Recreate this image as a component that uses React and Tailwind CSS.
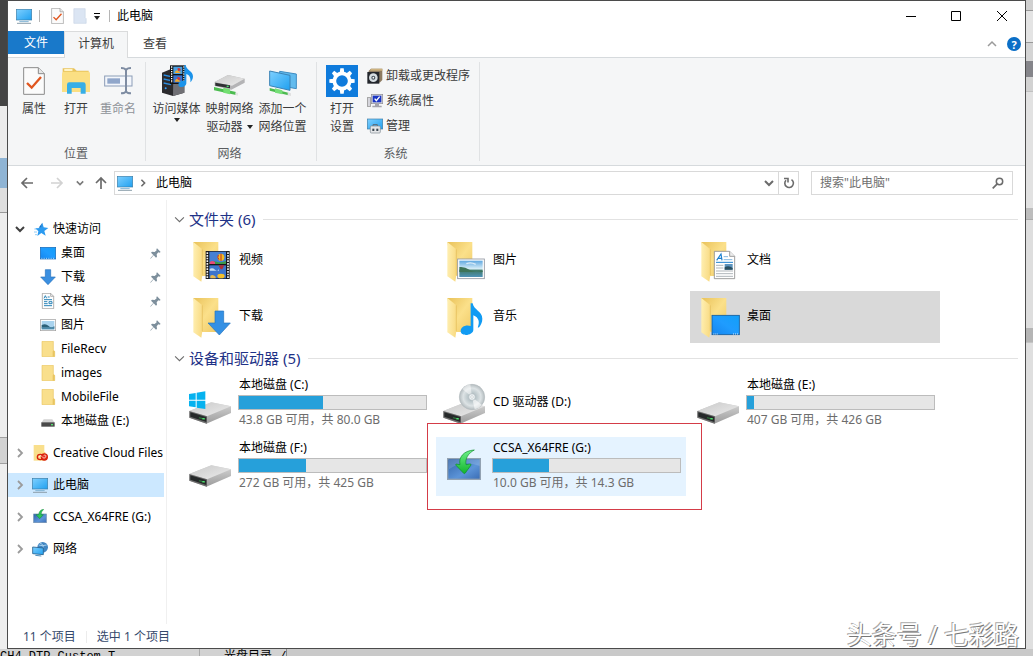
import React from "react";

/* ---------- shared paint ---------- */

function Paints() {
  return (
    <svg className="absolute h-0 w-0" aria-hidden="true">
      <defs>
        <linearGradient id="screen" x1="0" y1="0" x2="1" y2="1">
          <stop offset="0" stopColor="#7fd0ff" />
          <stop offset="1" stopColor="#1fa0f0" />
        </linearGradient>
        <linearGradient id="desk" x1="0" y1="1" x2="1" y2="0">
          <stop offset="0" stopColor="#1585ee" />
          <stop offset="0.5" stopColor="#1f9cff" />
          <stop offset="1" stopColor="#12a0f8" />
        </linearGradient>
        <linearGradient id="back" x1="0" y1="0" x2="1" y2="1">
          <stop offset="0" stopColor="#e9c25a" />
          <stop offset="0.5" stopColor="#fbe08a" />
          <stop offset="1" stopColor="#efc965" />
        </linearGradient>
        <linearGradient id="flap" x1="0" y1="0" x2="1" y2="0.2">
          <stop offset="0" stopColor="#fff0b4" />
          <stop offset="1" stopColor="#f9dc86" />
        </linearGradient>
        <linearGradient id="driveTop" x1="0" y1="0" x2="1" y2="1">
          <stop offset="0" stopColor="#c9c9c9" />
          <stop offset="1" stopColor="#ececec" />
        </linearGradient>
        <linearGradient id="driveSide" x1="0" y1="0" x2="0" y2="1">
          <stop offset="0" stopColor="#d6d6d6" />
          <stop offset="1" stopColor="#9c9c9c" />
        </linearGradient>
        <linearGradient id="sky" x1="0" y1="0" x2="0" y2="1">
          <stop offset="0" stopColor="#5fa8e0" />
          <stop offset="0.5" stopColor="#d8eef8" />
          <stop offset="0.6" stopColor="#3f7a6a" />
          <stop offset="1" stopColor="#4f93b8" />
        </linearGradient>
        <linearGradient id="green" x1="0" y1="0" x2="0" y2="1">
          <stop offset="0" stopColor="#6df08a" />
          <stop offset="1" stopColor="#12b52c" />
        </linearGradient>
        <linearGradient id="navy" x1="0" y1="0" x2="1" y2="1">
          <stop offset="0" stopColor="#2f62a8" />
          <stop offset="0.6" stopColor="#5c94d8" />
          <stop offset="1" stopColor="#3a6cb4" />
        </linearGradient>
        <radialGradient id="disc">
          <stop offset="0" stopColor="#ffffff" />
          <stop offset="0.3" stopColor="#b8c4c8" />
          <stop offset="0.7" stopColor="#dde3e5" />
          <stop offset="1" stopColor="#b4bcbf" />
        </radialGradient>
      </defs>
    </svg>
  );
}

/* ---------- small icons ---------- */

const PcIcon = () => (
  <svg viewBox="0 0 48 48" className="h-4 w-4 shrink-0">
    <rect x="1" y="4" width="46" height="32" fill="url(#screen)" stroke="#3d7ea8" strokeWidth="2" />
    <path d="M10 41h28" stroke="#7fb2d4" strokeWidth="3" />
    <path d="M3 46h42" stroke="#8da0ac" strokeWidth="3" />
  </svg>
);

const CheckDoc = ({ className }) => (
  <svg viewBox="0 0 66 84" className={className}>
    <path d="M2 2h44l18 18v62H2z" fill="#fbfbfb" stroke="#8b8b8b" strokeWidth="3" />
    <path d="M46 2v18h18" fill="#e6e6e6" stroke="#8b8b8b" strokeWidth="3" />
    <path d="M12 48l14 14 28-32" fill="none" stroke="#e0561f" strokeWidth="7" />
  </svg>
);

const BlankDoc = () => (
  <svg viewBox="0 0 39 48" className="h-4 w-3.5 shrink-0">
    <path d="M1 2h34v27l3 3v14H1z" fill="#dbe5f3" stroke="#c9d5e6" strokeWidth="2" />
  </svg>
);

const Caret = ({ className = "" }) => (
  <svg viewBox="0 0 6 4" className={"h-1 w-1.5 shrink-0 " + className}>
    <path d="M0 0h6L3 4z" fill="#222" />
  </svg>
);

const Chevron = ({ dir, color = "#8a8a8a", className = "h-2.5 w-2.5", weight = 1.5 }) => {
  const d = { down: "M1 3l4 4 4-4", up: "M1 7l4-4 4 4", right: "M3 1l4 4-4 4" }[dir];
  return (
    <svg viewBox="0 0 10 10" className={"shrink-0 " + className}>
      <path d={d} fill="none" stroke={color} strokeWidth={weight} />
    </svg>
  );
};

const StarIcon = () => (
  <svg viewBox="0 0 48 48" className="h-4 w-4 shrink-0">
    <path d="M28 5l4 14 14 2-12 9 4 14-13-8-12 9 3-14-9-9 15-1z" fill="#2b9af0" />
    <path d="M28 5l-4 15h-7z" fill="#1273c8" />
    <path d="M4 24h10M3 33h9M6 41h6" stroke="#5cb4f5" strokeWidth="2" />
  </svg>
);

const DeskIcon = () => (
  <svg viewBox="0 0 48 48" className="h-4 w-4 shrink-0">
    <rect x="1" y="7" width="46" height="35" fill="url(#desk)" stroke="#1567b4" strokeWidth="2" />
    <path d="M4 40h40" stroke="#fff" strokeWidth="2" strokeDasharray="3 4" />
  </svg>
);

const DownIcon = () => (
  <svg viewBox="0 0 48 48" className="h-4 w-4 shrink-0">
    <path d="M16 2h16v22h14L24 47 2 24h14z" fill="#3a8fe0" stroke="#2571bc" strokeWidth="2" />
  </svg>
);

const DocIcon = () => (
  <svg viewBox="0 0 48 48" className="h-4 w-4 shrink-0">
    <path d="M7 1h25l9 9v37H7z" fill="#fdfdfd" stroke="#8c8c8c" strokeWidth="2" />
    <path d="M32 1v9h9" fill="none" stroke="#8c8c8c" strokeWidth="2" />
    <path d="M12 16l4-8 4 8M23 12h6M12 20h24M12 32h11M12 38h24M27 26h9v6h-9z" fill="none" stroke="#2a84b8" strokeWidth="3" />
    <path d="M12 26h10" stroke="#2a84b8" strokeWidth="3" />
  </svg>
);

const PhotoIcon = () => (
  <svg viewBox="0 0 48 48" className="h-4 w-4 shrink-0">
    <rect x="1" y="8" width="46" height="33" fill="#fff" stroke="#9a9a9a" strokeWidth="2" />
    <rect x="5" y="12" width="38" height="25" fill="#a9d3ee" />
    <path d="M5 24q12-6 20 2t18 2v4H5z" fill="#2c6179" />
    <path d="M5 31h38v6H5z" fill="#4d8bab" />
  </svg>
);

const FolderIcon = () => (
  <svg viewBox="0 0 48 48" className="h-4 w-4 shrink-0">
    <path d="M6 1h34v27l4 3v16H6z" fill="#f9df8c" />
    <path d="M40 28l4 3v16h-6V31z" fill="#e8c462" />
    <path d="M6 1h34v27l4 3v16H6z" fill="none" stroke="#eac765" strokeWidth="2" />
  </svg>
);

const SmallDrive = () => (
  <svg viewBox="0 0 48 48" className="h-4 w-4 shrink-0">
    <path d="M11 19h26l7 10H4z" fill="#d3d3d3" />
    <rect x="4" y="28" width="40" height="13" fill="#4a4a4a" />
    <rect x="33" y="33" width="6" height="4" fill="#54e06c" />
  </svg>
);

const CreativeIcon = () => (
  <svg viewBox="0 0 48 48" className="h-4 w-4 shrink-0">
    <path d="M5 0h32v47H5z" fill="#f9df8c" />
    <path d="M36 22h4v24h-6z" fill="#ecca6c" />
    <g fill="none" stroke="#d8200c" strokeWidth="4">
      <ellipse cx="25" cy="36" rx="9" ry="8" />
      <ellipse cx="37" cy="36" rx="9" ry="9" fill="#e8301a" />
    </g>
    <path d="M21 36c5-6 7-4 10 0s7 5 10 0-2-8-6-4" fill="none" stroke="#fff" strokeWidth="2" />
  </svg>
);

const UsbIcon = () => (
  <svg viewBox="0 0 48 48" className="h-4 w-4 shrink-0">
    <rect x="5" y="15" width="38" height="26" fill="url(#navy)" stroke="#6f8eae" strokeWidth="2" />
    <path d="M35 1q-13 1-15 16h-8l11 12 11-12h-7Q27 8 35 1z" fill="#2cc45a" stroke="#148a3a" strokeWidth="1.5" />
  </svg>
);

const NetworkIcon = () => (
  <svg viewBox="0 0 48 48" className="h-4 w-4 shrink-0">
    <circle cx="32" cy="19" r="16" fill="#4186c2" />
    <path d="M24 6q10 3 10 13M20 12q10 4 24 0" fill="none" stroke="#a5d0ee" strokeWidth="3" />
    <path d="M2 18l32 3v20L2 38z" fill="url(#screen)" stroke="#28618e" strokeWidth="2.5" />
    <path d="M10 43l18 2" stroke="#4d90be" strokeWidth="3" />
  </svg>
);

const PinIcon = () => (
  <svg viewBox="0 0 33 33" className="h-[11px] w-[11px] shrink-0">
    <path d="M21 1l11 11-4 2-3-1-5 6 1 7-3 3-7-7-9 10-1-1 9-10-7-7 3-3 8 1 6-5-1-3z" fill="#7d8f9c" />
  </svg>
);

/* ---------- ribbon icons ---------- */

const OpenIcon = () => (
  <svg viewBox="0 0 96 96" className="h-8 w-8">
    <path d="M8 10h34l8 7h36v8H8z" fill="#e9c45c" />
    <rect x="12" y="12" width="26" height="6" rx="3" fill="#fff3c4" />
    <path d="M6 25l4-5h78l2 5v56H6z" fill="#fbdf83" />
    <path d="M21 86V59q0-7 7-7h42q7 0 7 7v27H62V69H35v17z" fill="#37aee6" />
  </svg>
);

const RenameIcon = () => (
  <svg viewBox="0 0 96 96" className="h-8 w-8">
    <rect x="8" y="33" width="82" height="30" fill="#f3f6fb" stroke="#8c9db8" strokeWidth="3" />
    <rect x="16" y="40" width="38" height="16" fill="#90a6ca" />
    <path d="M57 9q12 0 15 6 3-6 15-6M72 14v68M57 85q12 0 15-6 3 6 15 6" fill="none" stroke="#7e8ca2" strokeWidth="6" />
  </svg>
);

const MediaIcon = () => (
  <svg viewBox="0 0 96 96" className="h-8 w-8">
    <path d="M3 23l29-12 38 6v66l-34 10-33-10z" fill="#2b2b2e" />
    <path d="M37 28l33-9v64l-34 10z" fill="#707075" />
    <path d="M8 30l22 5M8 42l22 5M8 54l22 5" stroke="#2b8de0" strokeWidth="4" />
    <circle cx="14" cy="70" r="3" fill="#36a2ff" />
    <rect x="27" y="1" width="46" height="56" fill="#111" />
    <rect x="37" y="5" width="27" height="22" fill="#4b9fe0" />
    <rect x="37" y="31" width="27" height="22" fill="#3873d0" />
    <path d="M41 24q5-14 12-5l8 5zM41 50q5-14 12-5l8 5z" fill="#f0a92c" />
    <path d="M49 11q7-5 11 5l-8 2zM48 38q7-5 11 5l-8 2z" fill="#d23434" />
    <path d="M32 4v50M69 4v50" stroke="#fff" strokeWidth="4" strokeDasharray="4 3" />
    <path d="M70 0h4c2 16 22 18 22 34 0 8-4 14-8 18 2-14-3-22-12-25v28c0 12-24 16-24 4 0-9 10-13 18-11z" fill="#1b93ea" />
  </svg>
);

const NetDriveIcon = () => (
  <svg viewBox="0 0 96 96" className="h-8 w-8">
    <path d="M2 51l40-21 50 11v12L52 74 2 63z" fill="#b4b4b6" />
    <path d="M2 51l40-21 50 11-38 21z" fill="url(#driveTop)" />
    <path d="M4 53l44 8v9L4 62z" fill="#303034" />
    <rect x="38" y="62" width="6" height="4" fill="#4be070" />
    <path d="M0 66l66 15v9L0 76z" fill="#4cbc50" />
    <path d="M28 68l20 5v15l-20-5z" fill="#73df72" />
    <path d="M64 82l8 2v8l-8-2z" fill="#e4e4e4" />
  </svg>
);

const NetPlaceIcon = () => (
  <svg viewBox="0 0 96 96" className="h-8 w-8">
    <path d="M38 19l50 8v44l-50-9z" fill="#62bbee" stroke="#3f8cc2" strokeWidth="3" />
    <path d="M8 18l61 13v45L8 62z" fill="url(#screen)" stroke="#3b83b6" strokeWidth="3" />
    <path d="M8 69l56 14v8L8 77z" fill="#4cba50" />
    <path d="M24 70l22 6v12l-22-5z" fill="#76df78" />
    <path d="M62 82l10 3v8l-10-2z" fill="#e0e0e0" />
  </svg>
);

const SettingsIcon = () => (
  <svg viewBox="0 0 96 96" className="h-8 w-8">
    <rect width="96" height="96" fill="#0f7bdc" />
    <circle cx="48" cy="48" r="23" fill="none" stroke="#fff" strokeWidth="11" />
    {[0, 45, 90, 135, 180, 225, 270, 315].map((a) => (
      <path key={a} d="M41 23l2-13h10l2 13z" fill="#fff" transform={"rotate(" + a + " 48 48)"} />
    ))}
  </svg>
);

const UninstallIcon = () => (
  <svg viewBox="0 0 48 48" className="h-4 w-4 shrink-0">
    <path d="M4 10l8-8h34v34l-8 8z" fill="#8d7b62" />
    <path d="M12 2h34v6H9z" fill="#cdb27f" />
    <rect x="1" y="12" width="36" height="35" fill="#23262c" />
    <circle cx="19" cy="29" r="13" fill="#d6dde2" />
    <circle cx="19" cy="29" r="6" fill="#49545e" />
    <circle cx="19" cy="29" r="2.5" fill="#fff" />
  </svg>
);

const PropsIcon = () => (
  <svg viewBox="0 0 48 48" className="h-4 w-4 shrink-0">
    <rect x="1" y="14" width="10" height="26" fill="#d5d5dc" stroke="#888" strokeWidth="2" />
    <rect x="13" y="4" width="34" height="28" fill="#d8d8de" stroke="#8b8b94" strokeWidth="2" />
    <rect x="17" y="8" width="26" height="20" fill="#1b36c4" />
    <path d="M23 17l5 6 10-12" fill="none" stroke="#fff" strokeWidth="4" />
    <path d="M24 33h12v5h8v5H16v-5h8z" fill="#a4a4ac" />
  </svg>
);

const ManageIcon = () => (
  <svg viewBox="0 0 48 48" className="h-4 w-4 shrink-0">
    <rect x="1" y="3" width="46" height="30" fill="url(#screen)" stroke="#3d7ea8" strokeWidth="2" />
    <path d="M18 24v-4h13v4" fill="none" stroke="#5c6670" strokeWidth="3" />
    <rect x="10" y="24" width="30" height="21" rx="3" fill="#e4e6e8" stroke="#7c8790" strokeWidth="2" />
    <rect x="16" y="32" width="6" height="7" fill="#3d4852" />
    <rect x="28" y="32" width="6" height="7" fill="#3d4852" />
  </svg>
);

/* ---------- large folder icons, drawn on a shared folder ---------- */

const Overlay = {
  video: (
    <g>
      <rect x="38" y="30" width="72" height="84" fill="#17171b" />
      <path d="M43 34v78M105 34v78" stroke="#f4f4f4" strokeWidth="5" strokeDasharray="5 3" />
      <rect x="49" y="32" width="50" height="37" fill="#4580d2" />
      <rect x="49" y="73" width="50" height="39" fill="#3c74cc" />
      <path d="M49 64q12-6 22-2t28-2v9H49z" fill="#3b9a4a" />
      <path d="M50 64q8-8 16 0v5H50z" fill="#e8497a" />
      <ellipse cx="84" cy="49" rx="10" ry="11" fill="#f2bd24" />
      <path d="M84 38v22M76 42q-4 8 2 14" stroke="#c22c22" strokeWidth="3" fill="none" />
      <path d="M76 73h18l-6 12h-5z" fill="#b02f38" />
      <path d="M50 84q8-5 16 2t12-2v5H50z" fill="#c8def2" />
      <ellipse cx="84" cy="105" rx="11" ry="7" fill="#f4c02c" />
      <path d="M52 104q8-5 16 3v5H52z" fill="#e6b84e" />
    </g>
  ),
  picture: (
    <g>
      <rect x="32" y="54" width="80" height="59" fill="#fff" stroke="#8f95a0" strokeWidth="2.5" />
      <rect x="37" y="59" width="70" height="49" fill="url(#sky)" />
      <path d="M37 78q16-2 30 8t40 3v4H37z" fill="#3d7358" />
      <path d="M58 68q14-6 28 2" stroke="#fff" strokeWidth="4" fill="none" opacity="0.7" />
    </g>
  ),
  doc: (
    <g>
      <path d="M40 31h46l15 15v67H40z" fill="#fff" stroke="#8a8a8a" strokeWidth="2.5" />
      <path d="M86 31v15h15" fill="#eee" stroke="#8a8a8a" strokeWidth="2.5" />
      <path d="M47 58l13-19 3 19M51 52h11" fill="none" stroke="#1c80cf" strokeWidth="3.5" />
      <path d="M68 47h13M68 56h26" stroke="#6aa8d8" strokeWidth="2.5" />
      <path d="M45 64h51" stroke="#1c80cf" strokeWidth="3" />
      <path d="M45 73h22M45 81h22M45 90h51M45 98h51M45 106h51" stroke="#a0a7ad" strokeWidth="2.5" />
      <rect x="71" y="69" width="24" height="17" fill="#5c93bd" />
      <path d="M71 79q12-7 24 2v5H71z" fill="#2a4f60" />
    </g>
  ),
  download: <path d="M66 42h26v36h20L79 114 45 78h21z" fill="#3490e4" stroke="#2372be" strokeWidth="2" />,
  music: (
    <path
      d="M71 19h6c3 20 29 24 29 46 0 10-4 18-9 25-3 3-6 2-4-1 5-14 3-27-14-34v43c0 18-38 22-38 4 0-13 16-20 30-15z"
      fill="#119bf3"
    />
  ),
  desktop: (
    <g>
      <rect x="33" y="55" width="82" height="58" fill="url(#desk)" stroke="#135c9c" strokeWidth="2.5" />
      <path d="M37 111h14M96 111h18" stroke="#fff" strokeWidth="2.5" strokeDasharray="3 3" />
    </g>
  ),
};

const BigFolder = ({ kind }) => (
  <svg viewBox="0 0 120 126" className="h-[42px] w-10 shrink-0">
    <path d="M1 3h75v102H18z" fill="url(#back)" />
    <path d="M1 3l27 22v78l-3 19L1 106z" fill="url(#flap)" />
    <path d="M28 25v78" stroke="#e2b956" strokeWidth="2" />
    {Overlay[kind]}
  </svg>
);

/* ---------- large drive icons ---------- */

const DriveBody = () => (
  <g>
    <path d="M1 84l66-26 59 12v20l-74 32-51-18z" fill="url(#driveSide)" />
    <path d="M1 84l66-26 59 12-72 30z" fill="url(#driveTop)" />
    <path d="M1 84l53 16v22L1 104z" fill="#6d6d6d" />
    <path d="M4 88l48 14v15L4 101z" fill="#26292a" />
    <path d="M30 104l18 5" stroke="#2e6e3a" strokeWidth="4" />
    <rect x="40" y="105" width="7" height="4" fill="#4fe070" />
  </g>
);

const DriveArt = {
  windows: (
    <g>
      <DriveBody />
      <path d="M0 33l20-3v20H0zM23 29l26-4v25H23zM0 53h20v20l-20-3zM23 53h26v25l-26-4z" fill="#06b2ef" />
    </g>
  ),
  plain: <DriveBody />,
  cd: (
    <g>
      <DriveBody />
      <circle cx="87" cy="42" r="38" fill="url(#disc)" stroke="#b3bbbe" strokeWidth="2" />
      <path d="M87 42L58 18a38 38 0 0 1 24-14z" fill="#fff" opacity="0.5" />
      <path d="M87 42l30 24a38 38 0 0 1-22 13z" fill="#fff" opacity="0.6" />
      <circle cx="87" cy="42" r="10" fill="#eef3f5" stroke="#a9b4b8" strokeWidth="2" />
      <circle cx="87" cy="42" r="4" fill="#fff" stroke="#b3bbbe" strokeWidth="1.5" />
    </g>
  ),
  usb: (
    <g>
      <rect x="14" y="38" width="98" height="62" fill="url(#navy)" stroke="#93a2b2" strokeWidth="4" />
      <path d="M18 70q40-30 92-10v-18H18z" fill="#fff" opacity="0.15" />
      <path
        d="M93 12C62 14 46 34 51 56l-12-2q-2 2 1 5l22 23q3 2 5-1l17-24q1-4-4-3l-11 2c-3-18 6-34 25-44z"
        fill="url(#green)"
        stroke="#0d8c2a"
        strokeWidth="2"
      />
    </g>
  ),
};

const BigDrive = ({ kind }) => (
  <svg viewBox="0 0 129 126" className="h-[42px] w-[43px] shrink-0">
    {DriveArt[kind]}
  </svg>
);

/* ---------- page parts ---------- */

function TitleBar() {
  return (
    <header className="flex h-[30px] items-center bg-white">
      <div className="flex items-center pl-2">
        <PcIcon />
        <span className="ml-[7px] h-3 w-px bg-[#b5b5b5]" />
        <button aria-label="属性" className="ml-[11px]">
          <CheckDoc className="h-4 w-[13px]" />
        </button>
        <button aria-label="新建文件夹" className="ml-[9px]">
          <BlankDoc />
        </button>
        <button aria-label="自定义快速访问工具栏" className="ml-[7px] flex flex-col items-center gap-0.5">
          <span className="h-px w-1.5 bg-black" />
          <Caret />
        </button>
        <span className="ml-[9px] h-3 w-px bg-[#b5b5b5]" />
        <h1 className="ml-[7px]">此电脑</h1>
      </div>
      <div className="ml-auto flex h-full">
        <button aria-label="最小化" className="flex w-[45px] items-center justify-center">
          <svg viewBox="0 0 10 10" className="h-2.5 w-2.5"><path d="M0 5.5h10" stroke="#000" /></svg>
        </button>
        <button aria-label="最大化" className="flex w-[46px] items-center justify-center">
          <svg viewBox="0 0 10 10" className="h-2.5 w-2.5"><path d="M.5.5h9v9h-9z" fill="none" stroke="#000" /></svg>
        </button>
        <button aria-label="关闭" className="flex w-[46px] items-center justify-center">
          <svg viewBox="0 0 10 10" className="h-2.5 w-2.5"><path d="M0 0l10 10M10 0L0 10" stroke="#000" /></svg>
        </button>
      </div>
    </header>
  );
}

function TabRow() {
  return (
    <nav className="flex h-[27px] items-start border-b border-[#d6dadd] bg-white">
      <button className="h-[23px] w-14 bg-[#1979ca] text-white">文件</button>
      <button className="h-[27px] w-16 border-x border-t border-[#dadbdc] bg-[#f5f6f7] pb-[2px] text-[#3b3b3b]">计算机</button>
      <button className="h-[25px] w-[54px] text-[#3b3b3b]">查看</button>
      <div className="ml-auto flex h-full items-center gap-[10px] pr-1">
        <button aria-label="折叠功能区"><Chevron dir="up" color="#9a9a9a" /></button>
        <button aria-label="帮助" className="flex h-3.5 w-3.5 items-center justify-center rounded-full bg-[#0b6fc7] text-[11px] font-bold leading-none text-white">?</button>
      </div>
    </nav>
  );
}

function RibbonButton({ icon, lines, caret, caretBelow, width, muted }) {
  return (
    <button className={"flex flex-col items-center " + width + (muted ? " text-[#8f9399]" : "")}>
      <span className="flex h-8 items-center">{icon}</span>
      <span className="mt-[3px] leading-[18px] whitespace-nowrap">
        {lines[0]}
        {lines[1] && (
          <span className="flex items-center justify-center gap-1">
            {lines[1]}
            {caret && <Caret />}
          </span>
        )}
      </span>
      {caretBelow && <Caret />}
    </button>
  );
}

function RibbonGroup({ title, className, children }) {
  return (
    <section className={"relative flex flex-col justify-between pb-[3px] after:absolute after:inset-y-1 after:right-0 after:w-px after:bg-[#e0e2e4] " + className}>
      <div className="flex items-start pt-[7px]">{children}</div>
      <h2 className="text-center leading-4 text-[#5a5d61]">{title}</h2>
    </section>
  );
}

function Ribbon() {
  const tools = [
    [<UninstallIcon />, "卸载或更改程序"],
    [<PropsIcon />, "系统属性"],
    [<ManageIcon />, "管理"],
  ];
  return (
    <div className="flex h-[108px] border-b border-[#d6dadd] bg-[#f5f6f7] text-[#3b3b3b]">
      <RibbonGroup title="位置" className="pr-[7px] pl-[5px]">
        <RibbonButton width="w-[42px]" icon={<CheckDoc className="h-7 w-[22px]" />} lines={["属性"]} />
        <RibbonButton width="w-[42px]" icon={<OpenIcon />} lines={["打开"]} />
        <RibbonButton width="w-[42px]" icon={<RenameIcon />} lines={["重命名"]} muted />
      </RibbonGroup>
      <RibbonGroup title="网络" className="pr-[8px] pl-1">
        <RibbonButton width="w-[53px]" icon={<MediaIcon />} lines={["访问媒体"]} caretBelow />
        <RibbonButton width="w-[53px]" icon={<NetDriveIcon />} lines={["映射网络", "驱动器"]} caret />
        <RibbonButton width="w-[53px]" icon={<NetPlaceIcon />} lines={["添加一个", "网络位置"]} />
      </RibbonGroup>
      <RibbonGroup title="系统" className="pr-[10px] pl-1">
        <RibbonButton width="w-[42px]" icon={<SettingsIcon />} lines={["打开", "设置"]} />
        <div className="ml-1 flex flex-col">
          {tools.map(([icon, label]) => (
            <button key={label} className="flex h-[25px] items-center gap-[3px] pb-1 whitespace-nowrap">
              {icon}
              {label}
            </button>
          ))}
        </div>
      </RibbonGroup>
    </div>
  );
}

const Arrow = ({ d, color }) => (
  <svg viewBox="0 0 14 14" className="h-3.5 w-3.5">
    <path d={d} fill="none" stroke={color} strokeWidth="1.7" />
  </svg>
);

function AddressRow() {
  return (
    <div className="flex h-[34px] items-center bg-white pr-3">
      <div className="flex w-[106px] shrink-0 items-center pl-3">
        <button aria-label="后退"><Arrow d="M13 7H2M7 2L2 7l5 5" color="#6b6b6b" /></button>
        <button aria-label="前进" className="ml-4"><Arrow d="M1 7h11M7 2l5 5-5 5" color="#d2d2d2" /></button>
        <button aria-label="最近浏览的位置" className="ml-3"><Chevron dir="down" color="#7a7a7a" className="h-2 w-2" weight={2} /></button>
        <button aria-label="上移" className="ml-2.5"><Arrow d="M7 13V2M2 7l5-5 5 5" color="#6b6b6b" /></button>
      </div>
      <div className="flex h-6 flex-1 items-center border border-[#d9d9d9] pl-[2px]">
        <PcIcon />
        <Chevron dir="right" color="#6b6b6b" className="ml-[6px] h-2 w-2" weight={2} />
        <button className="ml-[9px]">此电脑</button>
        <button aria-label="以前的位置" className="mr-1 ml-auto"><Chevron dir="down" color="#6b6b6b" className="h-2.5 w-2.5" weight={2} /></button>
        <button aria-label="刷新" className="flex h-full w-5 items-center justify-center border-l border-[#d9d9d9]">
          <svg viewBox="0 0 12 12" className="h-3 w-3">
            <path d="M3 3.2A4.3 4.3 0 1 0 8.5 2.6" fill="none" stroke="#6b6b6b" strokeWidth="1.6" />
            <path d="M1 1.5h4v4" fill="none" stroke="#6b6b6b" strokeWidth="1.6" />
          </svg>
        </button>
      </div>
      <label className="ml-3 flex h-6 w-[202px] items-center border border-[#d9d9d9] pr-2 pl-2">
        <input aria-label="搜索" placeholder={'搜索"此电脑"'} className="min-w-0 flex-1 bg-transparent outline-none placeholder:text-[#707070]" />
        <svg viewBox="0 0 12 12" className="h-3 w-3">
          <circle cx="7.5" cy="4.5" r="3.2" fill="none" stroke="#6b6b6b" strokeWidth="1.5" />
          <path d="M5.2 6.8L.7 11.3" stroke="#6b6b6b" strokeWidth="1.7" />
        </svg>
      </label>
    </div>
  );
}

const quick = [
  [<DeskIcon />, "桌面", true],
  [<DownIcon />, "下载", true],
  [<DocIcon />, "文档", true],
  [<PhotoIcon />, "图片", true],
  [<FolderIcon />, "FileRecv"],
  [<FolderIcon />, "images"],
  [<FolderIcon />, "MobileFile"],
  [<SmallDrive />, "本地磁盘 (E:)"],
];

const roots = [
  [<CreativeIcon />, "Creative Cloud Files"],
  [<PcIcon />, "此电脑", true],
  [<UsbIcon />, "CCSA_X64FRE (G:)"],
  [<NetworkIcon />, "网络"],
];

function Sidebar() {
  return (
    <aside className="w-[159px] shrink-0 border-r border-[#f0f0f0] pt-[17px] pr-[2px]">
      <button className="flex h-6 w-full items-center pl-[7px]">
        <Chevron dir="down" color="#404040" weight={2} />
        <span className="mr-1 ml-2"><StarIcon /></span>
        快速访问
      </button>
      <ul>
        {quick.map(([icon, label, pinned]) => (
          <li key={label}>
            <a href="#" className="flex h-6 items-center gap-[5px] pr-[3px] pl-8">
              {icon}
              <span className="flex-1 whitespace-nowrap">{label}</span>
              {pinned && <PinIcon />}
            </a>
          </li>
        ))}
      </ul>
      <ul className="mt-2 flex flex-col gap-2">
        {roots.map(([icon, label, active]) => (
          <li key={label}>
            <a href="#" className={"flex h-6 items-center overflow-hidden pl-[7px] " + (active ? "bg-[#cce8ff]" : "")}>
              <Chevron dir="right" color="#9b9b9b" weight={1.8} />
              <span className="mr-[5px] ml-[7px] shrink-0">{icon}</span>
              <span className="whitespace-nowrap">{label}</span>
            </a>
          </li>
        ))}
      </ul>
    </aside>
  );
}

function SectionTitle({ children }) {
  return (
    <h2 className="flex h-[22px] items-center text-[15px] text-[#1e3287]">
      <Chevron dir="down" color="#6d6d6d" className="mr-1 h-[11px] w-[11px]" weight={1} />
      {children}
      <span className="ml-2 h-px flex-1 bg-[#e2e2e2]" />
    </h2>
  );
}

const folders = [
  ["video", "视频"],
  ["picture", "图片"],
  ["doc", "文档"],
  ["download", "下载"],
  ["music", "音乐"],
  ["desktop", "桌面", true],
];

const drives = [
  { kind: "windows", name: "本地磁盘 (C:)", used: 45, space: "43.8 GB 可用，共 80.0 GB" },
  { kind: "cd", name: "CD 驱动器 (D:)" },
  { kind: "plain", name: "本地磁盘 (E:)", used: 4, space: "407 GB 可用，共 426 GB" },
  { kind: "plain", name: "本地磁盘 (F:)", used: 36, space: "272 GB 可用，共 425 GB" },
  { kind: "usb", name: "CCSA_X64FRE (G:)", used: 30, space: "10.0 GB 可用，共 14.3 GB", marked: true },
];

function Drive({ kind, name, used, space, marked }) {
  return (
    <li className={"relative flex h-[59px] items-center pl-[7px] " + (marked ? "bg-[#e5f3ff]" : "")}>
      <BigDrive kind={kind} />
      {space ? (
        <div className="ml-1.5 w-[189px] pb-[2px]">
          <p className="pl-px leading-[18px]">{name}</p>
          <div className="mt-px h-[15px] border border-[#bcbcbc] bg-[#e6e6e6]">
            <div className="h-full bg-[#26a0da]" style={{ width: used + "%" }} />
          </div>
          <p className="mt-px pl-px leading-[18px] text-[#6d6d6d]">{space}</p>
        </div>
      ) : (
        <p className="ml-[7px] pb-1">{name}</p>
      )}
      {marked && <span className="pointer-events-none absolute -top-3.5 -right-4 -bottom-3.5 -left-[9px] border border-solid border-[#d43c48]" />}
    </li>
  );
}

function Content() {
  return (
    <main className="min-w-0 flex-1 pt-2 pr-[7px] pl-[7px]">
      <SectionTitle>文件夹 (6)</SectionTitle>
      <ul className="mt-[5px] grid grid-cols-[repeat(auto-fill,250px)] gap-1 pl-2">
        {folders.map(([kind, name, active]) => (
          <li key={kind}>
            <a href="#" className={"flex h-[52px] items-center gap-1.5 pt-[2px] pl-[11px] " + (active ? "bg-[#d9d9d9]" : "")}>
              <BigFolder kind={kind} />
              <span className="pb-1">{name}</span>
            </a>
          </li>
        ))}
      </ul>
      <div className="mt-1">
        <SectionTitle>设备和驱动器 (5)</SectionTitle>
      </div>
      <ul className="mt-[5px] grid grid-cols-[repeat(auto-fill,250px)] gap-1 pl-2">
        {drives.map((d) => (
          <Drive key={d.name} {...d} />
        ))}
      </ul>
    </main>
  );
}

function StatusBar() {
  return (
    <footer className="relative flex h-6 items-center pt-[2px] pl-[15px] text-[#35496b]">
      <span>11 个项目</span>
      <span className="mx-2.5 h-3 w-px bg-[#ececec]" />
      <span>选中 1 个项目</span>
      <span className="absolute right-1.5 bottom-0 text-[25px] leading-7 whitespace-nowrap text-white [text-shadow:1px_1px_0_#777,-1px_-1px_0_#aaa]">
        头条号 / 七彩路
      </span>
    </footer>
  );
}

export default function App() {
  return (
    <div className="flex min-h-screen flex-col bg-[#dcdcdc] font-['Noto_Sans','Noto_Sans_CJK_SC',sans-serif] text-[12px] leading-4 text-black">
      <Paints />
      <div className="flex flex-1">
        <div className="flex w-[7px] shrink-0 flex-col overflow-hidden" aria-hidden="true">
          <div className="h-[106px] bg-[#444]" />
          <div className="h-[52px] bg-[#ececec]" />
          <div className="h-[30px] bg-[#8fb4d4]" />
          <div className="h-[25px] border-b border-[#999] bg-[#dedede]" />
          <div className="h-[224px] bg-[#ededed]" />
          <div className="h-[27px] border-y border-[#a0a0a0] bg-[#d2d2d2]" />
          <div className="flex-1 bg-[#eeeeee]" />
        </div>
        <div className="flex min-w-0 flex-1 flex-col border border-[#4b4b4b] bg-white">
          <TitleBar />
          <TabRow />
          <Ribbon />
          <AddressRow />
          <div className="flex flex-1">
            <Sidebar />
            <Content />
          </div>
          <StatusBar />
        </div>
        <div className="flex w-[7px] shrink-0 flex-col overflow-hidden" aria-hidden="true">
          <div className="h-[10px] bg-[#d0d0d0]" />
          <div className="h-[33px] border-y border-[#999] bg-[#e4e4e4]" />
          <div className="h-[18px] bg-[#d4d4d4]" />
          <div className="h-4 bg-[#85858a]" />
          <div className="h-[15px] border-b border-[#c0c0c0] bg-[#d2d2d2]" />
          <div className="h-[116px] bg-[#e2e2e2]" />
          <div className="h-3 border-b border-[#aaa] bg-[#bdbdbd]" />
          <div className="h-[108px] bg-[#dedede]" />
          <div className="h-3.5 bg-[#b5b5b5]" />
          <div className="flex-1 border-t border-[#c4c4c4] bg-[#dfdfdf]" />
        </div>
      </div>
      <div className="flex h-[7px] overflow-hidden bg-[#d2d2d2] font-['Liberation_Mono','Noto_Sans_CJK_SC',monospace]" aria-hidden="true">
        <span className="w-[200px] border-r border-[#aaa] whitespace-nowrap">CH4 DTP Custom T</span>
        <span className="w-[87px] border-r border-[#888] pl-6 whitespace-nowrap">光盘目录 /</span>
        <span className="flex-1 bg-[#c9c9c9]" />
      </div>
    </div>
  );
}
